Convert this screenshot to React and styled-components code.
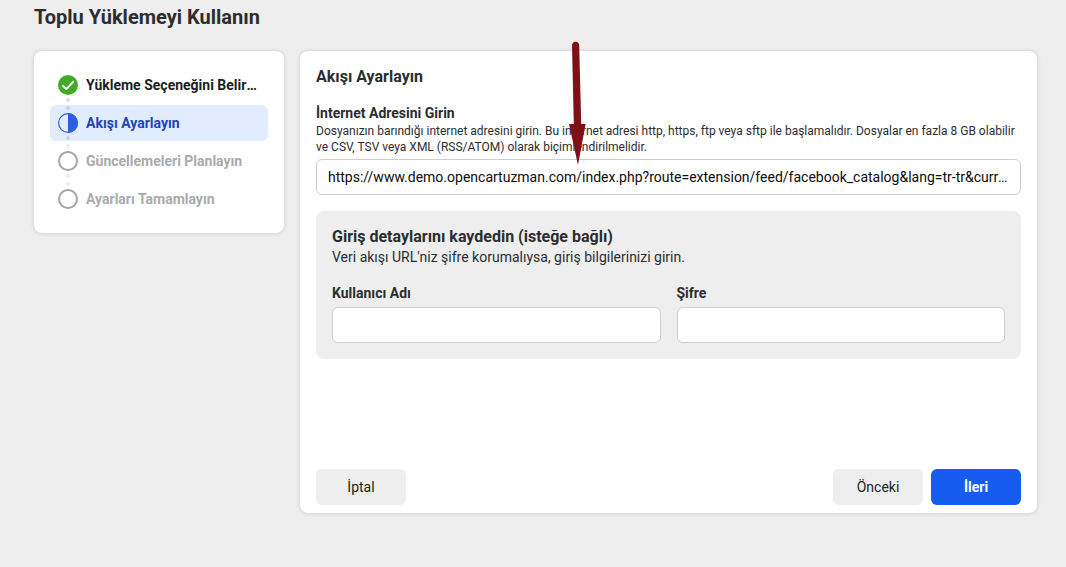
import React from "react";
import styled, { createGlobalStyle, css } from "styled-components";

const GlobalStyle = createGlobalStyle`
  *, *::before, *::after { box-sizing: border-box; }
  body {
    margin: 0;
    background: #eeeeee;
    color: #2b2d30;
    font-family: Roboto, "Liberation Sans", sans-serif;
    font-size: 14px;
    line-height: 20px;
  }
  h1, h2, h3, p, ol { margin: 0; padding: 0; }
  button, input { font: inherit; }
`;

const Page = styled.div`
  padding: 5px 29px 48px 34px;
`;

const Title = styled.h1`
  font-size: 20px;
  line-height: 24px;
  font-weight: 700;
  margin-bottom: 22px;
`;

const Layout = styled.div`
  display: grid;
  grid-template-columns: 250px minmax(0, 1fr);
  gap: 16px;
  align-items: start;
`;

const Card = styled.section`
  background: #fff;
  border-radius: 8px;
  box-shadow: 0 0 4px rgba(0, 0, 0, 0.16);
`;

const Sidebar = styled(Card).attrs({ as: "nav" })`
  padding: 16px;
`;

const StepList = styled.ol`
  list-style: none;
  display: flex;
  flex-direction: column;
  gap: 2px;
`;

const StepItem = styled.li`
  display: flex;
  align-items: center;
  gap: 8px;
  height: 36px;
  padding: 0 8px;
  border-radius: 6px;
  font-weight: 700;
  color: #a8abad;
  ${(p) => p.$state === "done" && css`color: #1c1e21;`}
  ${(p) => p.$state === "current" && css`
    color: #1d44b8;
    background: #e1edfe;
  `}
`;

const Track = styled.span`
  display: flex;
  flex: none;
  flex-direction: column;
  align-items: center;
  gap: 3px;
`;

const Dot = styled.span`
  width: 4px;
  height: 4px;
  border-radius: 50%;
  background: ${(p) => p.$color};
`;

const StepLabel = styled.span`
  overflow: hidden;
  text-overflow: ellipsis;
  white-space: nowrap;
`;

const Main = styled(Card).attrs({ as: "form" })`
  position: relative;
  padding: 16px 16px 8px;
`;

const Heading = styled.h2`
  font-size: 16px;
  line-height: 20px;
  font-weight: 700;
`;

const Field = styled.div`
  display: flex;
  flex-direction: column;
  gap: 4px;
  margin-top: 16px;
`;

const Label = styled.label`
  font-weight: 700;
`;

const Hint = styled.p`
  font-size: 12px;
  line-height: 16px;
  margin-top: -4px;
`;

const TextInput = styled.input`
  width: 100%;
  height: 36px;
  padding: 0 11px;
  border: 1px solid #cccfd2;
  border-radius: 6px;
  background: #fff;
  color: #0c0d0e;
  text-overflow: ellipsis;
  outline: none;
`;

const LoginPanel = styled.section`
  margin-top: 16px;
  padding: 16px;
  border-radius: 8px;
  background: #eeeeee;
`;

const FieldRow = styled.div`
  display: grid;
  grid-template-columns: 1fr 1fr;
  gap: 16px;
`;

const Footer = styled.footer`
  display: flex;
  gap: 8px;
  margin-top: 110px;
`;

const Button = styled.button`
  width: 90px;
  height: 36px;
  border: 0;
  border-radius: 6px;
  background: ${(p) => (p.$primary ? "#175cf0" : "#eeeeee")};
  color: ${(p) => (p.$primary ? "#fff" : "#1c1e21")};
  font-weight: ${(p) => (p.$primary ? 700 : 400)};
  &:first-child { margin-right: auto; }
`;

const Arrow = styled.svg`
  position: absolute;
  top: -10px;
  left: 268px;
  pointer-events: none;
`;

function StepIcon({ state }) {
  if (state === "done") {
    return (
      <svg width="20" height="20" viewBox="0 0 20 20" aria-hidden="true">
        <circle cx="10" cy="10" r="10" fill="#42ab25" />
        <path d="M4.9 10.7 8.4 14.1 15.1 6.8" fill="none" stroke="#fff" strokeWidth="1.9" strokeLinecap="round" strokeLinejoin="round" />
      </svg>
    );
  }
  if (state === "current") {
    return (
      <svg width="20" height="20" viewBox="0 0 20 20" aria-hidden="true">
        <circle cx="10" cy="10" r="9.4" fill="none" stroke="#2a5fe2" strokeWidth="1.2" />
        <path d="M10 0a10 10 0 0 1 0 20z" fill="#2a5fe2" />
      </svg>
    );
  }
  return (
    <svg width="20" height="20" viewBox="0 0 20 20" aria-hidden="true">
      <circle cx="10" cy="10" r="9" fill="#fff" stroke="#a0a4ab" strokeWidth="2" />
    </svg>
  );
}

const steps = [
  { label: "Yükleme Seçeneğini Belirleyin", state: "done", dots: ["transparent", "#dcdddf"] },
  { label: "Akışı Ayarlayın", state: "current", dots: ["#c5cfdf", "#c5cfdf"] },
  { label: "Güncellemeleri Planlayın", state: "pending", dots: ["#ededee", "#ededee"] },
  { label: "Ayarları Tamamlayın", state: "pending", dots: ["#ededee", "transparent"] },
];

const feedUrl =
  "https://www.demo.opencartuzman.com/index.php?route=extension/feed/facebook_catalog&lang=tr-tr&currency=TRY";

export default function App() {
  return (
    <>
      <GlobalStyle />
      <Page>
        <Title>Toplu Yüklemeyi Kullanın</Title>
        <Layout>
          <Sidebar>
            <StepList>
              {steps.map((step) => (
                <StepItem key={step.label} $state={step.state}>
                  <Track>
                    <Dot $color={step.dots[0]} />
                    <StepIcon state={step.state} />
                    <Dot $color={step.dots[1]} />
                  </Track>
                  <StepLabel>{step.label}</StepLabel>
                </StepItem>
              ))}
            </StepList>
          </Sidebar>
          <Main onSubmit={(e) => e.preventDefault()}>
            <Heading>Akışı Ayarlayın</Heading>
            <Field>
              <Label htmlFor="feed-url">İnternet Adresini Girin</Label>
              <Hint>
                Dosyanızın barındığı internet adresini girin. Bu internet adresi http, https, ftp veya sftp ile
                başlamalıdır. Dosyalar en fazla 8 GB olabilir ve CSV, TSV veya XML (RSS/ATOM) olarak
                biçimlendirilmelidir.
              </Hint>
              <TextInput id="feed-url" type="text" defaultValue={feedUrl} />
            </Field>
            <LoginPanel>
              <Heading>Giriş detaylarını kaydedin (isteğe bağlı)</Heading>
              <p>Veri akışı URL'niz şifre korumalıysa, giriş bilgilerinizi girin.</p>
              <FieldRow>
                <Field>
                  <Label htmlFor="username">Kullanıcı Adı</Label>
                  <TextInput id="username" type="text" />
                </Field>
                <Field>
                  <Label htmlFor="password">Şifre</Label>
                  <TextInput id="password" type="password" />
                </Field>
              </FieldRow>
            </LoginPanel>
            <Footer>
              <Button type="button">İptal</Button>
              <Button type="button">Önceki</Button>
              <Button type="submit" $primary>İleri</Button>
            </Footer>
            <Arrow width="20" height="126" viewBox="0 0 20 126" aria-hidden="true">
              <path
                d="M4 4.5C4 2.300 5.500 .8 7.600 .8S11.200 2.300 11.200 4.500L13.200 83H17.600L10 124 1 83H5.800z"
                fill="#7f1017"
              />
            </Arrow>
          </Main>
        </Layout>
      </Page>
    </>
  );
}
